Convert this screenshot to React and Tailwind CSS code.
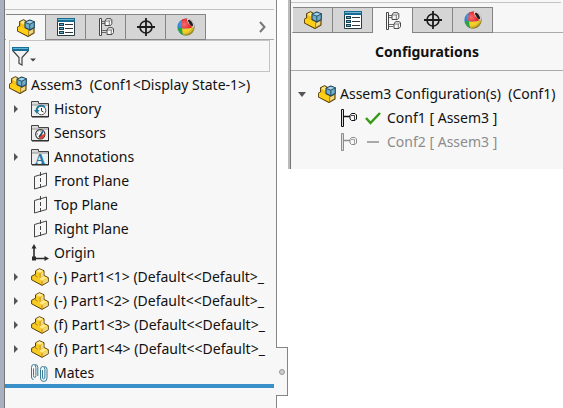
import React from "react";

function AssemblyIcon() {
  return (
    <svg width="18" height="18" viewBox="0 0 18 18" className="block shrink-0" aria-hidden="true">
      <path d="M.6 8.2 2.6 7V2.8L6.5.7 9 2.2V9l8-.5v5.4L11 17.4.6 12Z" fill="#f5bf18" stroke="#59420c" strokeWidth="1.1" strokeLinejoin="round" />
      <path d="M3.2 3 6.5 1.3 8.6 2.5 8 4.6 6 5.5Z" fill="#ffe583" />
      <path d="M.9 8.3 3 7.3l8.3 4.4v5.1L1 11.7Z" fill="#ffcf16" />
      <path d="m11.6 11.8 5-2.4v4.3l-5 3Z" fill="#f4d77d" stroke="#6e510b" strokeWidth=".6" />
      <path d="m8 3.3 4.7-2.2 4.6 1.7v5.6L12.8 11 8 8.6Z" fill="#6fadcb" stroke="#1f4558" strokeWidth="1.1" strokeLinejoin="round" />
      <path d="m8.5 3.5 4.2-1.8 3.9 1.4-3.8 2Z" fill="#a4d4ec" />
      <path d="M8 3.4 12.8 5.2V11M12.8 5.2l4.5-2.3" fill="none" stroke="#1f4558" strokeWidth=".9" />
    </svg>
  );
}

function PartIcon() {
  return (
    <svg width="18" height="18" viewBox="0 0 18 18" className="block shrink-0" aria-hidden="true">
      <path d="M.6 8.200 4.500 6.200V2.800L8.500.7 13 2.700V7.500L17.300 9.600v4.200L11 17.400.6 11.800Z" fill="#f9ca24" stroke="#59420c" strokeLinejoin="round" />
      <path d="m5.200 3 3.300-1.700L12.300 3 9 4.700Z" fill="#ffeb9c" />
      <path d="M9.500 5.500 12.500 4v3.700L9.500 9.200Z" fill="#f3d680" />
      <path d="m9.700 10 3.300-1.700 3.300 1.500-5.200 2.700-2.500-1.500Z" fill="#ffeb9c" />
      <path d="m11.500 13.300 5.300-2.800v3l-5.300 3Z" fill="#f3d680" />
      <path d="M4.500 6.200v1.900l2.200 1" fill="none" stroke="#a57a12" strokeWidth=".8" />
      <path d="M9.100 5v4.700M11.100 13v4" fill="none" stroke="#a57a12" strokeWidth=".7" />
    </svg>
  );
}

function PropertyIcon() {
  return (
    <svg width="18" height="18" viewBox="0 0 18 18" className="block" aria-hidden="true">
      <path d="M.5.5h17v17H.5Z" fill="#fff" stroke="#283b45" />
      <path d="M0 0h18v4H0Z" fill="#176b90" />
      <path d="M1 1h16v1H1Z" fill="#74b7d2" />
      <path d="M2 5h5v3H2ZM2 9h5v3H2ZM2 13h5v3H2Z" fill="#183e50" />
      <path d="M3 6h3v1H3ZM3 10h3v1H3ZM3 14h3v1H3Z" fill="#59a9ca" />
      <path d="M8 6.5h8M8 10.5h8M8 14.5h8" stroke="#30383c" />
    </svg>
  );
}

function ConfigTreeIcon() {
  return (
    <svg width="16" height="18" viewBox="0 0 16 18" className="block" fill="none" stroke="#484848" aria-hidden="true">
      <path d="M1.500.5h2v17h-2Z" fill="#fff" />
      <path d="M4 3.500h4M4 5.500h3M4 12.500h5M4 14.500h4" strokeWidth=".8" />
      <path d="M7 3 8.500.7h4.300l1 1v4L12.500 7.500H7Z" fill="#fafafa" />
      <path d="M7.500 3h3.800v4M11.300 3 13 1.500" strokeWidth=".7" />
      <path d="M9 12 10.500 9.700h4l1 1v4l-1.500 1.800H9Z" fill="#fafafa" />
      <path d="M9.500 12h3.800v4M13.300 12 15 10.500" strokeWidth=".7" />
    </svg>
  );
}

function TargetIcon() {
  return (
    <svg width="18" height="18" viewBox="0 0 18 18" className="block" fill="none" stroke="#1b1b1b" aria-hidden="true">
      <circle cx="9" cy="9" r="6" strokeWidth="1.6" />
      <path d="M9 0v18M0 9h18" strokeWidth="1.8" />
    </svg>
  );
}

function AppearanceIcon({ id }) {
  return (
    <svg width="18" height="18" viewBox="0 0 18 18" className="block" aria-hidden="true">
      <defs>
        <clipPath id={id}><circle cx="9" cy="9" r="8.6" /></clipPath>
        <radialGradient id={id + "-shade"} cx=".4" cy=".35" r=".65">
          <stop offset="0" stopColor="#fff" stopOpacity=".35" />
          <stop offset=".6" stopColor="#fff" stopOpacity="0" />
          <stop offset="1" stopColor="#000" stopOpacity=".4" />
        </radialGradient>
      </defs>
      <g clipPath={"url(#" + id + ")"}>
        <path d="M0 0h18v18H0Z" fill="#2b7fd0" />
        <path d="M5 0h8l5 9-9 2-5-1Z" fill="#e92225" />
        <path d="M0 11q3-2 6-.5L7 18H0Z" fill="#22a13a" />
        <path d="M5 10.500q6 1 13-2V18H6Z" fill="#f4cf1c" />
        <path d="M9.500 0H18v9l-2 .7-5-4.700Z" fill="#f4e4dc" />
        <path d="M11 2q1.500-1 3.500 1.500T16 8q-1.500 1-3.500-2T11 2Z" fill="#181818" />
      </g>
      <circle cx="9" cy="9" r="8.6" fill={"url(#" + id + "-shade)"} />
    </svg>
  );
}

function FolderIcon({ kind }) {
  return (
    <svg width="18" height="18" viewBox="0 0 18 18" className="block shrink-0" aria-hidden="true">
      <path d="M.5 1.5h7v2h10v13H.5Z" fill="#d9d9d9" stroke="#454545" />
      <path d="M1 5.5h16V16H1Z" fill="#eee" />
      <path d="M1 5h16" stroke="#999" />
      <path d="M17.5 4v13H1" stroke="#222" fill="none" />
      {kind === "history" && (
        <g fill="none">
          <circle cx="10.5" cy="10.5" r="4.3" fill="#fff" stroke="#555" />
          <path d="M14 7.5A4.7 4.7 0 0 0 5.5 10v2" stroke="#217ca5" strokeWidth="1.7" />
          <path d="m3 10 3 4 2.5-4Z" fill="#217ca5" />
          <path d="M10.5 8v3l2 1" stroke="#333" />
        </g>
      )}
      {kind === "sensors" && (
        <g>
          <circle cx="9.3" cy="10.3" r="4.6" fill="#fff" stroke="#333" strokeWidth="1.2" />
          <path d="m9.300 11 4.300-1v1.500a4.600 4.600 0 0 1-4 3.400l-2-.3Z" fill="#e2442d" />
          <path d="M8 13l4-5.5" stroke="#164e70" strokeWidth="1.6" />
          <path d="M6 10h1M7 7.5l.7.7M10 6.8v1" stroke="#555" />
        </g>
      )}
      {kind === "annotations" && (
        <text x="9" y="15.500" textAnchor="middle" fontFamily="Liberation Serif, serif" fontSize="14" fontWeight="700" fill="#2079a5">A</text>
      )}
    </svg>
  );
}

function PlaneIcon() {
  return (
    <svg width="18" height="18" viewBox="0 0 18 18" className="block shrink-0" fill="none" stroke="#454545" aria-hidden="true">
      <path d="M3.5 4.5 15.5 1v12.5l-12 3.5Z" />
      <path d="M9.5 0v18" strokeDasharray="4 2" />
    </svg>
  );
}

function OriginIcon() {
  return (
    <svg width="18" height="18" viewBox="0 0 18 18" className="block shrink-0" aria-hidden="true">
      <path d="M3 3v11.500H15" fill="none" stroke="#2c2c2c" strokeWidth="1.6" />
      <path d="M.5 4.500 3 0l2.500 4.500ZM13.500 12 18 14.500 13.500 17ZM1 12.500h4v4H1Z" fill="#2c2c2c" />
    </svg>
  );
}

function MatesIcon() {
  return (
    <svg width="18" height="18" viewBox="0 0 18 18" className="block shrink-0" fill="none" stroke="#347b98" aria-hidden="true">
      <path d="M2.500 4.500v7q0 2 1.200 2t1.200-2V3.500Q4.900.5 2.700.5T.5 3.500V13q0 2.500 2 2.500" />
      <path d="M6.800 12V3.500q0-3-2.600-3" />
      <path d="M11.500 6v7q0 2 1.200 2t1.200-2V5.500q0-3-2.200-3t-2.200 3V14q0 3.500 3.200 3.500t3.300-3.500V5.500q0-3-2.600-3" />
    </svg>
  );
}

function FilterIcon() {
  return (
    <svg width="25" height="19" viewBox="0 0 25 19" className="block" aria-hidden="true">
      <path d="M.7 3.500 7 10.500v6l3 1.500v-7.500l6.500-7" fill="#f3f3f3" stroke="#444" strokeWidth="1.200" />
      <path d="M0 0h17v4H0Z" fill="#176f96" />
      <path d="M1 1h15v1H1Z" fill="#62b4d6" />
      <path d="M18 11.500h6L21 14.500Z" fill="#444" />
    </svg>
  );
}

function ConfigIcon() {
  return (
    <svg width="17" height="18" viewBox="0 0 17 18" className="block shrink-0" fill="none" stroke="currentColor" aria-hidden="true">
      <path d="M1.500.5h2v17h-2Z" fill="#ddd" />
      <path d="M4 7.500h6" strokeWidth="1.500" />
      <path d="M10 6.500 11.500 4.500H15L16.500 6v4L15 11.500h-3.500L10 10Z" fill="#f7f7f7" />
      <path d="M11 6.500h3.500v4.500" strokeWidth=".8" />
    </svg>
  );
}

const tabs = [
  ["FeatureManager", AssemblyIcon],
  ["PropertyManager", PropertyIcon],
  ["ConfigurationManager", ConfigTreeIcon],
  ["DimXpertManager", TargetIcon],
  ["DisplayManager", AppearanceIcon],
];

function TabBar({ active, name, children }) {
  return (
    <div className="flex h-[26px]">
      <div className="w-px border-b border-[#aaa]" />
      <div className="flex shrink-0" role="tablist" aria-label={name}>
        {tabs.map(([label, Icon], i) => (
          <button
            key={label}
            type="button"
            role="tab"
            aria-label={label}
            aria-selected={i === active}
            className={
              "flex w-10 items-center justify-center border-t border-r border-[#858585] " +
              (i === active ? "bg-[#f7f7f7]" : "border-b bg-[#d5d5d5]")
            }
          >
            <Icon {...(Icon === AppearanceIcon ? { id: name } : {})} />
          </button>
        ))}
      </div>
      <div className="flex flex-1 items-center justify-end border-b border-[#aaa] pr-2">{children}</div>
    </div>
  );
}

const features = [
  ["History", <FolderIcon kind="history" />, true],
  ["Sensors", <FolderIcon kind="sensors" />],
  ["Annotations", <FolderIcon kind="annotations" />, true],
  ["Front Plane", <PlaneIcon />],
  ["Top Plane", <PlaneIcon />],
  ["Right Plane", <PlaneIcon />],
  ["Origin", <OriginIcon />],
  ["(-) Part1<1> (Default<<Default>_", <PartIcon />, true],
  ["(-) Part1<2> (Default<<Default>_", <PartIcon />, true],
  ["(f) Part1<3> (Default<<Default>_", <PartIcon />, true],
  ["(f) Part1<4> (Default<<Default>_", <PartIcon />, true],
  ["Mates", <MatesIcon />],
];

function FeaturePanel() {
  return (
    <section className="relative flex w-[277px] shrink-0 border-r border-[#858585] bg-[#f7f7f7]">
      <div className="w-[5px] shrink-0 border-r border-[#777] bg-[#a9b1c0]" />
      <div className="mr-0.5 flex min-w-0 flex-1 flex-col">
        <div className="mb-1 h-[10px] border-b border-[#c4c4c4]" />
        <TabBar active={0} name="features">
          <button type="button" aria-label="More tabs">
            <svg width="7" height="12" viewBox="0 0 7 12" className="block" fill="none" stroke="#777" strokeWidth="2" aria-hidden="true">
              <path d="m1 1 4.500 5L1 11" />
            </svg>
          </button>
        </TabBar>
        <label className="mx-1 flex h-8 items-center border border-[#c4c4c4] pl-0.5">
          <FilterIcon />
          <input type="text" aria-label="Filter" className="min-w-0 flex-1 bg-transparent outline-none" />
        </label>
        <div className="mt-px flex h-6 items-center gap-1 pl-1 whitespace-pre">
          <AssemblyIcon />
          <span>{"Assem3  (Conf1<Display State-1>)"}</span>
        </div>
        <ul>
          {features.map(([label, icon, expandable]) => (
            <li key={label} className="flex h-6 items-center">
              <div className="flex w-[26px] shrink-0 pl-2">
                {expandable && (
                  <button type="button" aria-label={"Expand " + label}>
                    <svg width="6" height="8" viewBox="0 0 6 8" className="block" aria-hidden="true">
                      <path d="M1 0v8l4-4Z" fill="#555" />
                    </svg>
                  </button>
                )}
              </div>
              {icon}
              <span className="ml-[5px] whitespace-nowrap">{label}</span>
            </li>
          ))}
        </ul>
        <div className="-mt-px h-1 bg-[#398fc7]" />
      </div>
      <button
        type="button"
        aria-label="Resize panel"
        className="absolute top-[347px] left-[276px] flex h-[49px] w-3 items-center justify-center border-y border-r border-[#858585] bg-[#f7f7f7]"
      >
        <span className="size-1.5 rounded-full border border-[#999] bg-[#ccc]" />
      </button>
    </section>
  );
}

function ConfigurationPanel() {
  return (
    <section className="ml-[11px] min-w-0 flex-1 self-start border-l-2 border-[#bbb]">
      <div className="border-l border-[#777] bg-[#f7f7f7] pb-[15px]">
        <div className="mr-0.5 mb-1 h-[3px] border-b border-[#c4c4c4]" />
        <div className="pl-px">
          <TabBar active={2} name="configurations" />
        </div>
        <h2 className="flex h-[38px] items-center justify-center border-b border-[#aaa] text-[14px] font-bold">Configurations</h2>
        <div className="mt-[11px] flex h-6 items-center whitespace-pre">
          <button type="button" aria-label="Collapse Assem3" className="w-[27px] shrink-0 pl-[7px]">
            <svg width="8" height="5" viewBox="0 0 8 5" className="block" aria-hidden="true">
              <path d="M0 0h8L4 5Z" fill="#555" />
            </svg>
          </button>
          <AssemblyIcon />
          <span className="ml-1">{"Assem3 Configuration(s)  (Conf1)"}</span>
        </div>
        <ul>
          <li className="flex h-6 items-center pl-[49px]">
            <ConfigIcon />
            <svg width="16" height="14" viewBox="0 0 16 14" className="mr-1.5 ml-2 block" aria-hidden="true">
              <path d="m1 7 4.500 5L15 2" fill="none" stroke="#369b13" strokeWidth="2.500" />
            </svg>
            <span>Conf1 [ Assem3 ]</span>
          </li>
          <li className="flex h-6 items-center pl-[49px] text-[#8c8c8c]">
            <ConfigIcon />
            <svg width="16" height="14" viewBox="0 0 16 14" className="mr-1.5 ml-2 block" aria-hidden="true">
              <path d="M2 7h12" stroke="#aaa" strokeWidth="2" />
            </svg>
            <span>Conf2 [ Assem3 ]</span>
          </li>
        </ul>
      </div>
    </section>
  );
}

export default function App() {
  return (
    <main className="flex min-h-screen bg-white font-['Noto_Sans','Open_Sans',sans-serif] text-[14px] leading-6 text-[#111]">
      <FeaturePanel />
      <ConfigurationPanel />
    </main>
  );
}
